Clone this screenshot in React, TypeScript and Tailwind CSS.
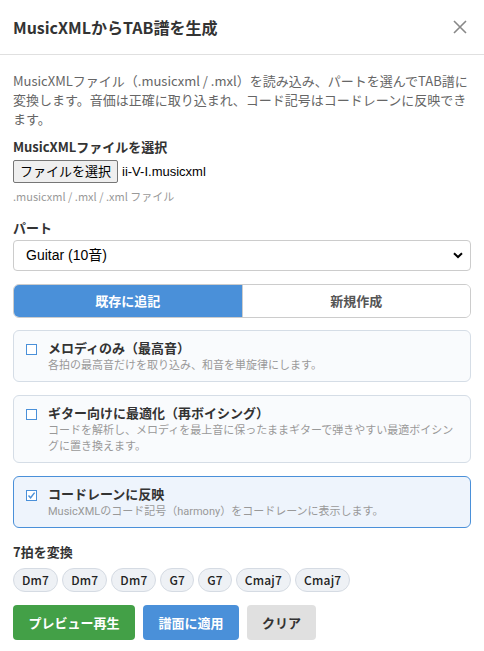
import { useState } from "react";

const chords = ["Dm7", "Dm7", "Dm7", "G7", "G7", "Cmaj7", "Cmaj7"];

const options = [
  {
    title: "メロディのみ（最高音）",
    description: "各拍の最高音だけを取り込み、和音を単旋律にします。",
    checked: false,
  },
  {
    title: "ギター向けに最適化（再ボイシング）",
    description:
      "コードを解析し、メロディを最上音に保ったままギターで弾きやすい最適ボイシングに置き換えます。",
    checked: false,
  },
  {
    title: "コードレーンに反映",
    description: "MusicXMLのコード記号（harmony）をコードレーンに表示します。",
    checked: true,
  },
];

export default function App() {
  const [mode, setMode] = useState<"append" | "new">("append");

  return (
    <div className="w-[484px] h-[651px] bg-white text-[#333] font-['Noto_Sans_CJK_JP',sans-serif] overflow-hidden">
      {/* Header */}
      <div className="h-[55px] flex items-center justify-between pl-[13px] pr-[17px] border-b border-[#e0e0e0]">
        <h2 className="text-[16px] font-bold">MusicXMLからTAB譜を生成</h2>
        <svg width="14" height="14" viewBox="0 0 14 14" className="text-[#888]">
          <path d="M1 1L13 13M13 1L1 13" stroke="currentColor" strokeWidth="1.6" />
        </svg>
      </div>

      <div className="px-[13px] pt-[16px]">
        <p className="text-[13px] leading-[19px] text-[#666]">
          MusicXMLファイル（.musicxml / .mxl）を読み込み、パートを選んでTAB譜に変換します。音価は正確に取り込まれ、コード記号はコードレーンに反映できます。
        </p>

        <div className="mt-[9px] text-[13px] font-bold leading-[19px]">MusicXMLファイルを選択</div>
        <div className="mt-[4px] flex items-center h-[23px]">
          <button className="h-[23px] px-[6px] border border-[#767676] rounded-[2px] bg-[#efefef] text-[13px] text-black font-['Liberation_Sans','Noto_Sans_CJK_JP',sans-serif]">
            ファイルを選択
          </button>
          <span className="ml-[4px] text-[13px] text-black font-['Liberation_Sans',sans-serif]">ii-V-I.musicxml</span>
        </div>
        <div className="mt-[6px] text-[11px] leading-[15px] text-[#999]">.musicxml / .mxl / .xml ファイル</div>

        <div className="mt-[14px] text-[13px] font-bold leading-[19px]">パート</div>
        <div className="mt-[3px] h-[31px] border border-[#ccc] rounded-[4px] flex items-center justify-between pl-[12px] pr-[7px]">
          <span className="text-[14px] text-black font-['Liberation_Sans','Noto_Sans_CJK_JP',sans-serif]">Guitar (10音)</span>
          <svg width="10" height="7" viewBox="0 0 10 7">
            <path d="M1 1.2L5 5L9 1.2" fill="none" stroke="black" strokeWidth="2" />
          </svg>
        </div>

        {/* Mode toggle */}
        <div className="mt-[13px] h-[34px] flex border border-[#ccc] rounded-[6px] overflow-hidden">
          <button
            onClick={() => setMode("append")}
            className={`flex-1 text-[13px] font-bold ${mode === "append" ? "bg-[#4a90d9] text-white" : "bg-white text-[#555]"}`}
          >
            既存に追記
          </button>
          <button
            onClick={() => setMode("new")}
            className={`flex-1 text-[13px] font-bold border-l border-[#ccc] ${mode === "new" ? "bg-[#4a90d9] text-white" : "bg-white text-[#555]"}`}
          >
            新規作成
          </button>
        </div>

        {/* Options */}
        <div className="mt-[12px] flex flex-col gap-[13px] font-['Roboto','Noto_Sans_CJK_JP',sans-serif]">
          {options.map((opt, i) => (
            <div
              key={i}
              className={`rounded-[6px] border pl-[12px] pr-[14px] pt-[9px] pb-[7px] flex gap-[11px] ${
                opt.checked ? "bg-[#eef4fc] border-[#4a90d9]" : "bg-[#f9fbfd] border-[#d5dde6]"
              }`}
            >
              <span className="mt-[4px] w-[11px] h-[11px] border border-[#4a90d9] bg-white shrink-0 flex items-center justify-center">
                {opt.checked && (
                  <svg width="9" height="9" viewBox="0 0 9 9">
                    <path d="M1.5 4.5L3.6 6.8L7.6 1.6" fill="none" stroke="#4a90d9" strokeWidth="1.4" />
                  </svg>
                )}
              </span>
              <div className="flex flex-col">
                <span className="text-[13px] font-bold leading-[18px] text-[#333]">{opt.title}</span>
                <span className="text-[11px] leading-[16px] text-[#999]">{opt.description}</span>
              </div>
            </div>
          ))}
        </div>

        <div className="mt-[14px] text-[13px] font-bold leading-[19px]">7拍を変換</div>
        <div className="mt-[7px] flex gap-[4px]">
          {chords.map((c, i) => (
            <span
              key={i}
              className="h-[24px] px-[8px] rounded-full bg-[#eef1f5] border border-[#d5dbe3] text-[12px] font-medium leading-[22px] text-[#222] tracking-[0.2px]"
            >
              {c}
            </span>
          ))}
        </div>

        <div className="mt-[13px] flex gap-[8px]">
          <button className="h-[35px] w-[122px] rounded-[4px] bg-[#43a047] text-white text-[13px] font-bold">
            プレビュー再生
          </button>
          <button className="h-[35px] w-[96px] rounded-[4px] bg-[#4a90d9] text-white text-[13px] font-bold">
            譜面に適用
          </button>
          <button className="h-[35px] w-[69px] rounded-[4px] bg-[#e0e0e0] text-[#333] text-[13px] font-bold">
            クリア
          </button>
        </div>
      </div>
    </div>
  );
}
